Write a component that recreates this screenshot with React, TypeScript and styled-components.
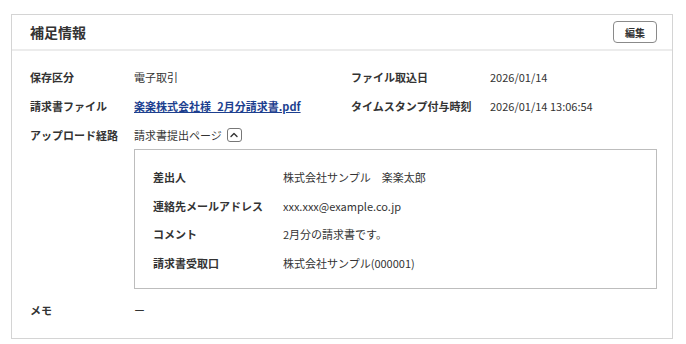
import React from "react";
import styled, { createGlobalStyle } from "styled-components";

const Global = createGlobalStyle`
  html, body { margin: 0; padding: 0; background: #fff; }
  body { font-family: "Noto Sans CJK JP", "Noto Sans", sans-serif; color: #333; }
`;

const Page = styled.div`
  padding: 14px 13px 7px 11px;
`;

const Card = styled.section`
  border: 1px solid #d4d4d4;
  background: #fff;
`;

const Header = styled.header`
  height: 34px;
  display: flex;
  align-items: center;
  justify-content: space-between;
  padding: 0 15px 0 18px;
  border-bottom: 2px solid #ececec;
`;

const Title = styled.h2`
  margin: 0;
  font-size: 14px;
  font-weight: 700;
  color: #333;
  line-height: 20px;
`;

const EditButton = styled.button`
  width: 44px;
  height: 22px;
  border: 1px solid #8a8a8a;
  border-radius: 4px;
  background: #fff;
  font-family: inherit;
  font-size: 10px;
  font-weight: 700;
  color: #333;
  padding: 0;
  display: flex;
  align-items: center;
  justify-content: center;
`;

const Body = styled.div`
  padding: 17px 15px 19px 18px;
  display: grid;
  grid-template-columns: 104px 217px 139px 1fr;
  row-gap: 11px;
  font-size: 11px;
  line-height: 18px;
`;

const Label = styled.div`
  font-weight: 700;
  color: #333;
`;

const Value = styled.div<{ $span?: boolean }>`
  color: #333;
  grid-column: ${(p) => (p.$span ? "2 / -1" : "auto")};
`;

const FileLink = styled.a`
  color: #1d3f8f;
  font-weight: 700;
  text-decoration: underline;
`;

const UploadCell = styled.div`
  grid-column: 2 / -1;
  display: flex;
  flex-direction: column;
  gap: 5px;
  margin-bottom: 1px;
`;

const RouteLine = styled.div`
  display: flex;
  align-items: center;
  gap: 5px;
`;

const ToggleButton = styled.button`
  width: 15px;
  height: 14px;
  border: 1px solid #777;
  border-radius: 3px;
  background: #fff;
  padding: 0;
  display: flex;
  align-items: center;
  justify-content: center;
`;

const DetailBox = styled.div`
  border: 1px solid #bdbdbd;
  padding: 18px 18px 16px 18px;
  display: grid;
  grid-template-columns: 130px 1fr;
  row-gap: 10.7px;
`;

const Data = [
  ["差出人", "株式会社サンプル　楽楽太郎"],
  ["連絡先メールアドレス", "xxx.xxx@example.co.jp"],
  ["コメント", "2月分の請求書です。"],
  ["請求書受取口", "株式会社サンプル(000001)"],
];

export default function App() {
  return (
    <Page>
      <Global />
      <Card>
        <Header>
          <Title>補足情報</Title>
          <EditButton>編集</EditButton>
        </Header>
        <Body>
          <Label>保存区分</Label>
          <Value>電子取引</Value>
          <Label>ファイル取込日</Label>
          <Value>2026/01/14</Value>

          <Label>請求書ファイル</Label>
          <Value>
            <FileLink href="#">楽楽株式会社様_2月分請求書.pdf</FileLink>
          </Value>
          <Label>タイムスタンプ付与時刻</Label>
          <Value>2026/01/14 13:06:54</Value>

          <Label>アップロード経路</Label>
          <UploadCell>
            <RouteLine>
              請求書提出ページ
              <ToggleButton aria-label="閉じる">
                <svg width="8" height="6" viewBox="0 0 8 6">
                  <path d="M1 4.5 L4 1.5 L7 4.5" fill="none" stroke="#333" strokeWidth="1.4" strokeLinecap="round" strokeLinejoin="round" />
                </svg>
              </ToggleButton>
            </RouteLine>
            <DetailBox>
              {Data.map(([k, v]) => (
                <React.Fragment key={k}>
                  <Label>{k}</Label>
                  <Value>{v}</Value>
                </React.Fragment>
              ))}
            </DetailBox>
          </UploadCell>

          <Label>メモ</Label>
          <Value $span>ー</Value>
        </Body>
      </Card>
    </Page>
  );
}
